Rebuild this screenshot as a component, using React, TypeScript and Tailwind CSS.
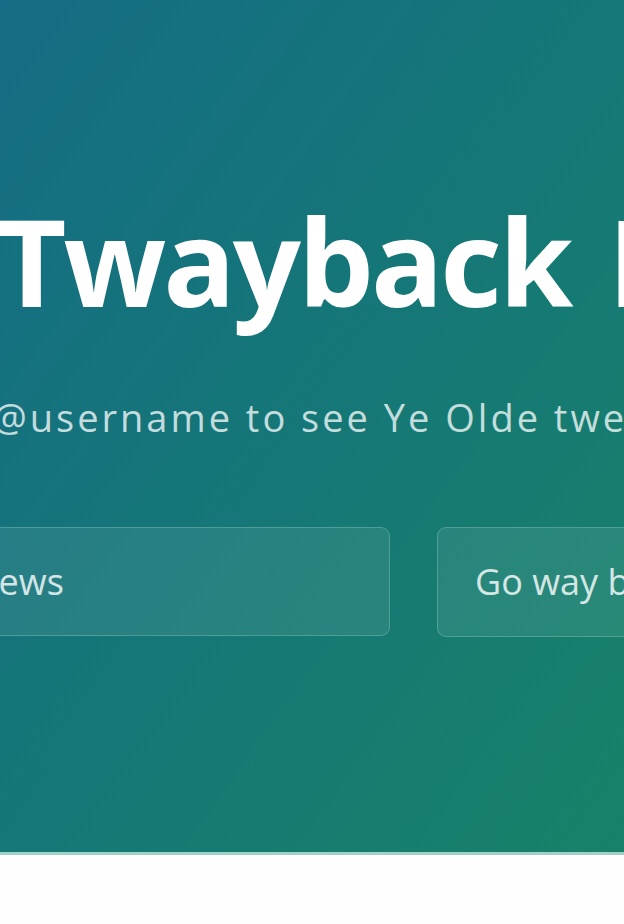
import React from 'react';

export default function App() {
    return (
        <div className="min-h-[924px] bg-[#fefefe] font-['Open_Sans',sans-serif]">
            {/* HERO */}
            <section className="h-[855px] overflow-hidden border-b-[3px] border-[#9fd1c9] bg-linear-to-br from-[#156c84] to-[#188268] pt-[201px]">
                <h1 className="ml-[-3px] whitespace-nowrap text-[120px] font-bold leading-none tracking-[-3px] [word-spacing:9px] text-white">
                    Twayback Machine
                </h1>
                <p className="ml-[-167px] mt-[77px] whitespace-nowrap text-[38px] leading-none tracking-[3px] text-white/75">
                    Enter a @username to see Ye Olde tweets
                </p>

                {/* Search row */}
                <div className="mt-[91px] flex gap-[47px]">
                    <input
                        type="text"
                        placeholder="e.g. @BBCNews"
                        className="ml-[-250px] h-[109px] w-[640px] shrink-0 rounded-[9px] border border-white/20 bg-white/8 pl-[51px] text-[36px] text-white outline-none placeholder:text-white/80"
                    />
                    <button className="h-[110px] w-[260px] shrink-0 rounded-[9px] border border-white/20 bg-white/8 pl-[37px] text-left text-[36px] whitespace-nowrap text-white/80">
                        Go way back!
                    </button>
                </div>
            </section>
        </div>
    );
}
